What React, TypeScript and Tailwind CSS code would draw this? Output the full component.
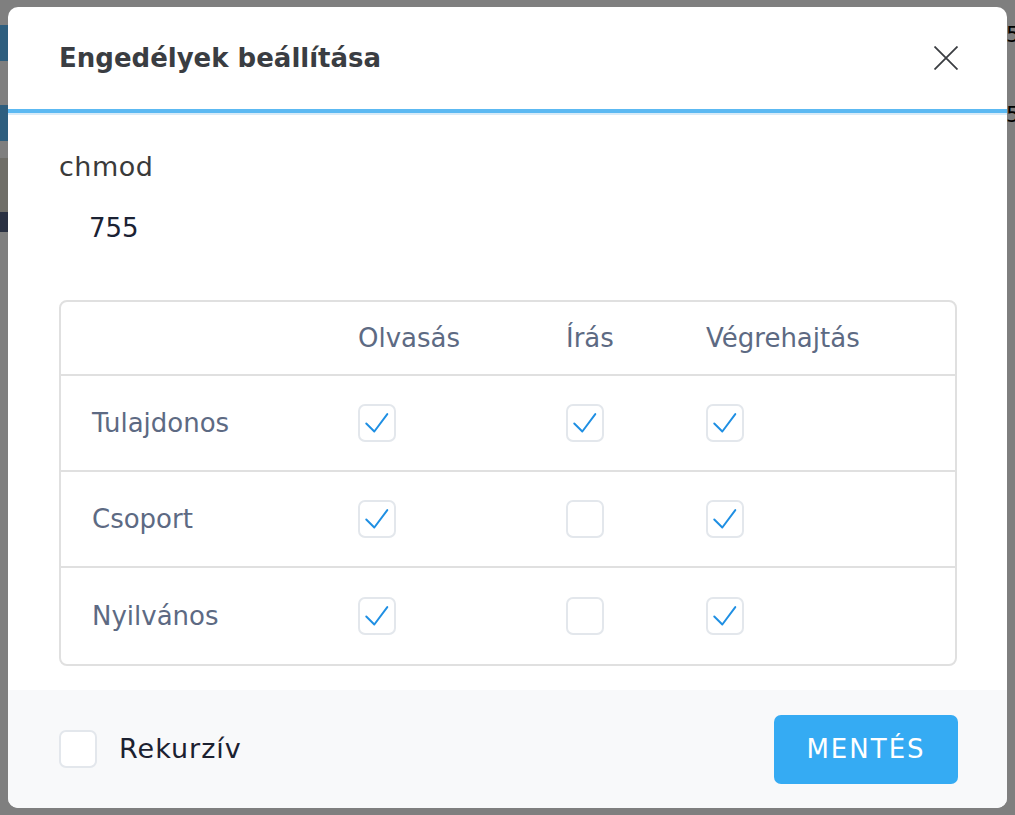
import { useState } from "react";

type Perm = { label: string; read: boolean; write: boolean; exec: boolean };

const INITIAL_PERMS: Perm[] = [
  { label: "Tulajdonos", read: true, write: true, exec: true },
  { label: "Csoport", read: true, write: false, exec: true },
  { label: "Nyilvános", read: true, write: false, exec: true },
];

function CheckBox({ checked, onClick }: { checked: boolean; onClick?: () => void }) {
  return (
    <button
      type="button"
      onClick={onClick}
      className="flex h-[38px] w-[38px] items-center justify-center rounded-[7px] border-2 border-[#e3e7ec] bg-white"
    >
      {checked && (
        <svg viewBox="0 0 38 38" className="h-[38px] w-[38px]" fill="none">
          <path d="M7 19.5 L16 28.5 L30.5 9" stroke="#1f8fe3" strokeWidth="2.2" strokeLinecap="round" strokeLinejoin="round" />
        </svg>
      )}
    </button>
  );
}

export default function App() {
  const [perms, setPerms] = useState<Perm[]>(INITIAL_PERMS);
  const [recursive, setRecursive] = useState(false);

  const toggle = (i: number, key: "read" | "write" | "exec") =>
    setPerms((p) => p.map((row, j) => (j === i ? { ...row, [key]: !row[key] } : row)));

  return (
    <div className="relative h-[815px] w-full overflow-hidden bg-white font-['DejaVu_Sans',sans-serif]">
      {/* page behind the overlay */}
      <div className="flex h-full justify-between">
        <div className="flex w-[8px] flex-col">
          <div className="h-[25px]" />
          <div className="h-[36px] bg-[#5cbcfc]" />
          <div className="h-[44px]" />
          <div className="h-[36px] bg-[#5cbcfc]" />
          <div className="h-[17px]" />
          <div className="h-[54px] bg-[#dedcd0]" />
          <div className="h-[20px] bg-[#546284]" />
        </div>
        <div className="flex w-[8px] flex-col pt-[24px] text-[22px] leading-none text-black">
          <span className="-ml-px">5</span>
          <span className="-ml-px mt-[58px]">5</span>
        </div>
      </div>

      {/* overlay */}
      <div className="absolute inset-0 flex items-center justify-center bg-black/50">
        <div className="flex h-[801px] w-[999px] flex-col overflow-hidden rounded-[10px] bg-white">
          <div className="flex h-[106px] shrink-0 items-center justify-between border-b-4 border-[#5cb9f2] pl-[51px] pr-[49px]">
            <h1 className="text-[26px] font-bold text-[#3a3d42]">Engedélyek beállítása</h1>
            <button type="button" className="h-[24px] w-[24px]">
              <svg viewBox="0 0 24 24" className="h-[24px] w-[24px]" fill="none">
                <path d="M0.5 0.5 L23.5 23.5 M23.5 0.5 L0.5 23.5" stroke="#3a3d42" strokeWidth="1.8" />
              </svg>
            </button>
          </div>
          <div className="h-[2px] shrink-0 bg-[#d8ebf8]" />

          <div className="flex flex-1 flex-col pl-[51px] pr-[50px] pt-[32px]">
            <div className="text-[27px] leading-[39px] tracking-[0.5px] text-[#3a3a3a]">chmod</div>
            <div className="mt-[23px] pl-[30px] text-[26px] leading-[39px] text-[#1b2233]">755</div>

            <div className="mt-[52px] overflow-hidden rounded-[8px] border-2 border-[#e0e0e0]">
              <div className="grid h-[74px] grid-cols-[297px_208px_140px_1fr] items-center border-b-2 border-[#e0e0e0] text-[26px] text-[#5d6a83]">
                <div />
                <div>Olvasás</div>
                <div>Írás</div>
                <div>Végrehajtás</div>
              </div>
              {perms.map((row, i) => (
                <div
                  key={row.label}
                  className={
                    "grid h-[96px] grid-cols-[297px_208px_140px_1fr] items-center text-[26px] text-[#5d6a83]" +
                    (i < perms.length - 1 ? " border-b-2 border-[#e0e0e0]" : "")
                  }
                >
                  <div className="pl-[31px]">{row.label}</div>
                  <div>
                    <CheckBox checked={row.read} onClick={() => toggle(i, "read")} />
                  </div>
                  <div>
                    <CheckBox checked={row.write} onClick={() => toggle(i, "write")} />
                  </div>
                  <div>
                    <CheckBox checked={row.exec} onClick={() => toggle(i, "exec")} />
                  </div>
                </div>
              ))}
            </div>
          </div>

          <div className="flex h-[118px] shrink-0 items-center justify-between bg-[#f8f9fa] pl-[51px] pr-[49px]">
            <label className="flex items-center gap-[22px]">
              <CheckBox checked={recursive} onClick={() => setRecursive((r) => !r)} />
              <span className="text-[27px] tracking-[1px] text-[#1b2130]">Rekurzív</span>
            </label>
            <button
              type="button"
              className="h-[69px] w-[184px] rounded-[7px] bg-[#35abf3] text-[26px] tracking-[2px] text-white"
            >
              MENTÉS
            </button>
          </div>
        </div>
      </div>
    </div>
  );
}
